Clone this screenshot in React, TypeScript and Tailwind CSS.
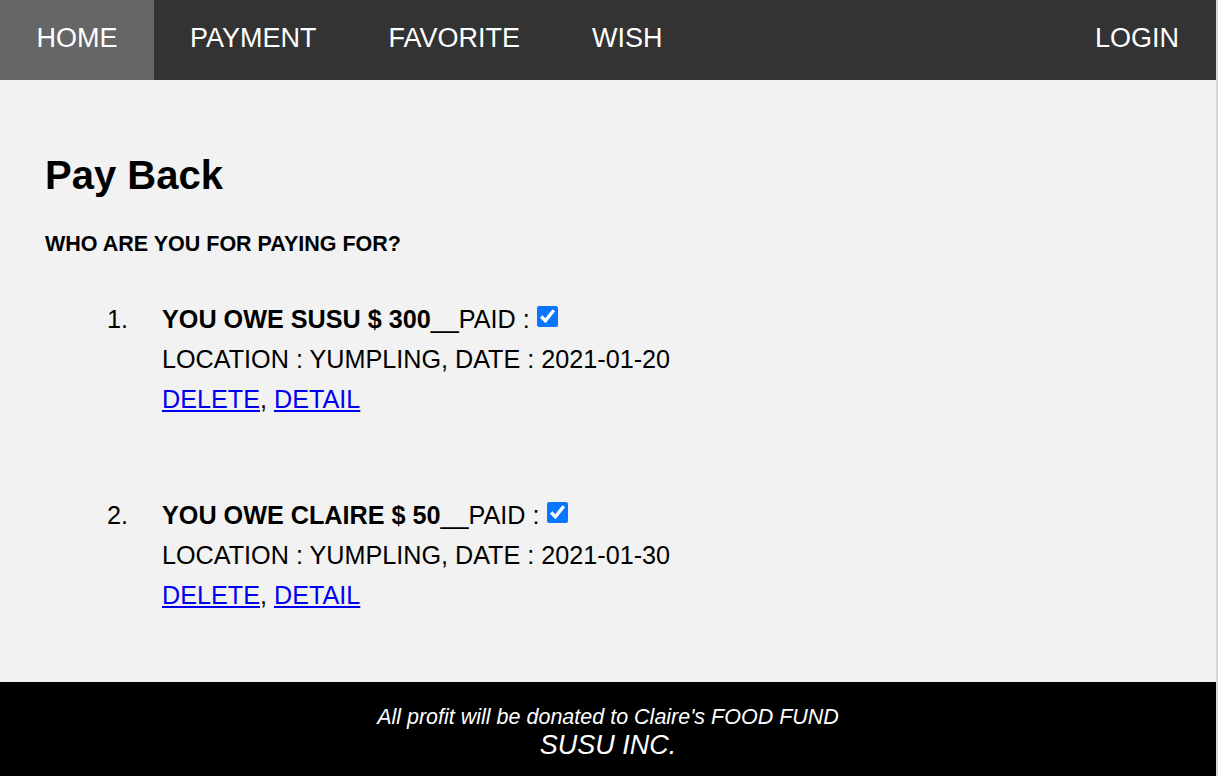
const navLinks = [
  { label: "PAYMENT", href: "#" },
  { label: "FAVORITE", href: "#" },
  { label: "WISH", href: "#" },
];

const debts = [
  { who: "SUSU", amount: 300, date: "2021-01-20" },
  { who: "CLAIRE", amount: 50, date: "2021-01-30" },
];

export default function App() {
  return (
    <div className="flex h-[776px] w-full overflow-hidden font-['Liberation_Sans',Arial,sans-serif] text-black">
      <div className="flex w-[1216px] flex-col">
        <header className="flex h-20 items-stretch bg-[#333333] text-[27px] text-white">
          <a href="#" className="flex w-[154px] items-center justify-center bg-[#666666] pb-[3px]">
            HOME
          </a>
          {navLinks.map((link) => (
            <a key={link.label} href={link.href} className="flex items-center px-9 pb-[3px]">
              {link.label}
            </a>
          ))}
          <a href="#" className="ml-auto flex items-center px-[37px] pb-[3px]">
            LOGIN
          </a>
        </header>

        <main className="flex-1 bg-[#f2f2f2] px-[45px] pt-[72px]">
          <h1 className="text-[40px] font-bold leading-[46px]">Pay Back</h1>
          <h4 className="mt-[34px] text-[21.5px] font-bold leading-6">WHO ARE YOU FOR PAYING FOR?</h4>

          <ol className="mt-[43px] flex flex-col gap-[76px] text-[25.2px] leading-10">
            {debts.map((d, i) => (
              <li key={d.who} className="ml-[62px] flex">
                <span className="w-[55px] shrink-0">{i + 1}.</span>
                <div>
                  <div className="flex items-center">
                    <b>
                      YOU OWE {d.who} $ {d.amount}
                    </b>
                    <span>__PAID :&nbsp;</span>
                    <input
                      type="checkbox"
                      checked
                      readOnly
                      className="h-[21px] w-[21px] -translate-y-[3px] accent-[#0a75ff]"
                    />
                  </div>
                  <div>LOCATION : YUMPLING, DATE : {d.date}</div>
                  <div>
                    <a href="#" className="text-[#0000ee] underline">
                      DELETE
                    </a>
                    ,{" "}
                    <a href="#" className="text-[#0000ee] underline">
                      DETAIL
                    </a>
                  </div>
                </div>
              </li>
            ))}
          </ol>
        </main>

        <footer className="flex h-[94px] flex-col items-center bg-black pt-[23px] italic text-white">
          <p className="text-[21.5px] leading-6">All profit will be donated to Claire's FOOD FUND</p>
          <p className="text-[27px] leading-8">SUSU INC.</p>
        </footer>
      </div>
      <div className="flex-1 bg-[#d6d6d6]" />
    </div>
  );
}
